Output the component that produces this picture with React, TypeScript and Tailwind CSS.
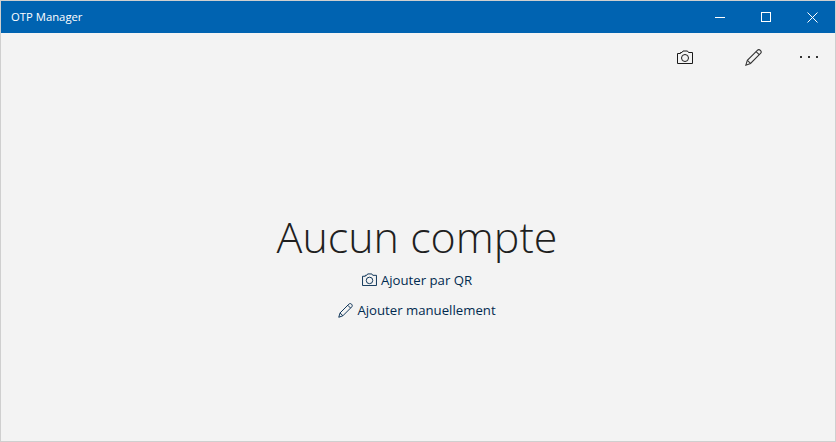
const CameraIcon = ({ className }: { className: string }) => (
  <svg viewBox="0 0 16 14" className={className} fill="none" stroke="currentColor" strokeWidth="1">
    <path d="M0.5 3.5H3.5V2.5H5L6 1H10.5L11.5 2.5H15.5V13.5H0.5Z" />
    <circle cx="8" cy="8" r="3.5" />
  </svg>
);

const PencilIcon = ({ className }: { className: string }) => (
  <svg viewBox="0 0 16 16" className={className} fill="none" stroke="currentColor" strokeWidth="1">
    <path d="M0.8 15.2L2.2 10.6L11.6 1.2C12.4 0.4 13.6 0.4 14.5 1.3C15.4 2.2 15.4 3.4 14.6 4.2L5.2 13.6Z" />
    <path d="M2.2 10.6L5.2 13.6M10.4 2.4L13.4 5.4" />
  </svg>
);

const TitleBar = () => (
  <div className="flex h-[32px] items-center justify-between bg-[#0063b1] pl-[10px] text-white">
    <span className="text-[11.3px] font-['Open_Sans',sans-serif]">OTP Manager</span>
    <div className="flex h-full">
      <div className="flex w-[46px] items-center justify-center">
        <div className="h-px w-[10px] bg-white" />
      </div>
      <div className="flex w-[46px] items-center justify-center">
        <div className="h-[10px] w-[10px] border border-white" />
      </div>
      <div className="flex w-[46px] items-center justify-center">
        <svg viewBox="0 0 11 11" className="h-[11px] w-[11px]" stroke="currentColor" strokeWidth="1">
          <path d="M0.5 0.5L10.5 10.5M10.5 0.5L0.5 10.5" />
        </svg>
      </div>
    </div>
  </div>
);

export default function App() {
  return (
    <div className="flex h-[442px] w-[836px] flex-col overflow-hidden border border-[#cfcfcf] bg-[#f3f3f3] font-['Open_Sans',sans-serif]">
      <TitleBar />
      <div className="flex flex-1 flex-col">
        <div className="flex h-[48px] items-center justify-end pr-[4px] text-[#1a1a1a]">
          <div className="flex w-[68px] justify-center">
            <CameraIcon className="h-[14px] w-[16px]" />
          </div>
          <div className="flex w-[68px] justify-center">
            <PencilIcon className="h-[17px] w-[17px] text-[#333333]" />
          </div>
          <div className="flex w-[44px] justify-center gap-[6px]">
            <div className="h-[2px] w-[2px] bg-[#333333]" />
            <div className="h-[2px] w-[2px] bg-[#333333]" />
            <div className="h-[2px] w-[2px] bg-[#333333]" />
          </div>
        </div>
        <div className="flex flex-1 flex-col items-center pt-[126px] pr-[2px]">
          <h1 className="text-[43px] leading-[60px] font-light text-[#1f1f1f]">Aucun compte</h1>
          <div className="flex h-[28px] items-center gap-[4px] text-[13.2px] text-[#012a4f]">
            <CameraIcon className="mb-[3px] h-[13px] w-[15px]" />
            <span>Ajouter par QR</span>
          </div>
          <div className="mt-[2px] flex h-[28px] items-center gap-[4px] text-[13.2px] text-[#012a4f]">
            <PencilIcon className="mb-[2px] h-[15px] w-[15px]" />
            <span>Ajouter manuellement</span>
          </div>
        </div>
      </div>
    </div>
  );
}
